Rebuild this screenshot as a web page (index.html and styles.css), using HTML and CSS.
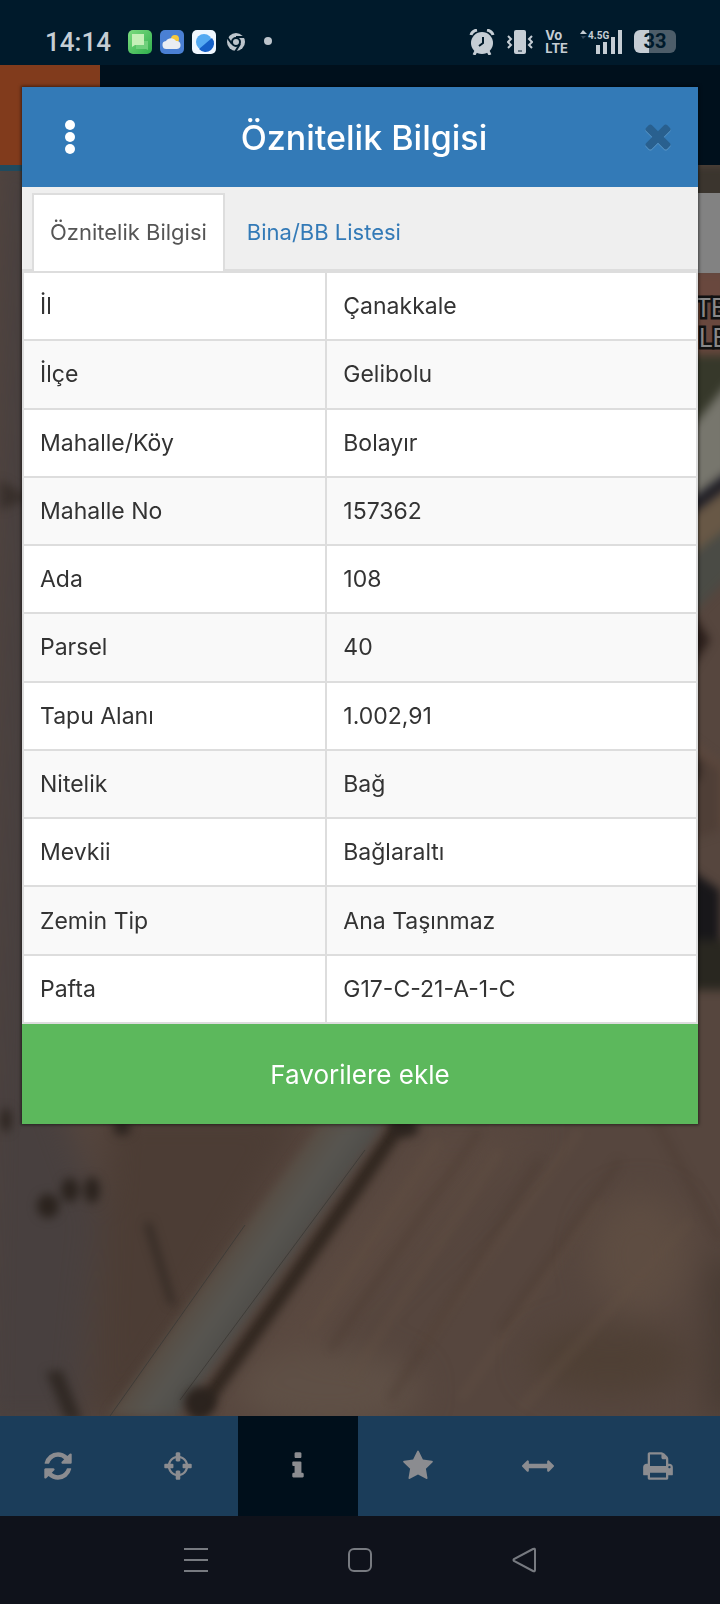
FILE: index.html
```html
<!DOCTYPE html>
<html lang="tr">
<head>
  <meta charset="UTF-8">
  <meta name="viewport" content="width=device-width, initial-scale=1">
  <title>Öznitelik Bilgisi</title>
  <link rel="stylesheet" href="styles.css">
</head>
<body>
  <div class="status-bar">
    <span class="clock">14:14</span>
    <svg class="app-icon" viewBox="0 0 24 24">
      <defs>
        <linearGradient id="msg" x1="0" y1="0" x2="1" y2="1"><stop offset="0" stop-color="#7ddc80"/><stop offset="1" stop-color="#2fae4c"/></linearGradient>
      </defs>
      <rect width="24" height="24" rx="5" fill="url(#msg)"/>
      <path d="M8 11h12v9l-2-1H8z" fill="#6fd07c"/>
      <path d="M4 4h12v11H7l-3 2z" fill="#c5f0b8"/>
    </svg>
    <svg class="app-icon" viewBox="0 0 24 24">
      <rect width="24" height="24" rx="5" fill="#4a80d4"/>
      <circle cx="15" cy="9" r="4" fill="#f7c83c"/>
      <path d="M7 19a4 4 0 0 1-1-8 6 6 0 0 1 10 0 4 4 0 0 1 1 8z" fill="#e9edf2"/>
    </svg>
    <svg class="app-icon" viewBox="0 0 24 24">
      <rect width="24" height="24" rx="5" fill="#f0f7ff"/>
      <circle cx="12" cy="12" r="8" fill="#55aaf2"/>
      <path d="M20 8a8 8 0 0 1-13 11z" fill="#1560c8"/>
    </svg>
    <svg class="app-icon" viewBox="0 0 24 24">
      <circle cx="12" cy="12" r="9" fill="#bcc4cb"/>
      <circle cx="12" cy="12" r="4" fill="none" stroke="#001a2b" stroke-width="2"/>
      <path d="M12 7h9M16 14l-5 8M8 14L3 7" fill="none" stroke="#001a2b" stroke-width="2"/>
    </svg>
    <svg class="app-icon" viewBox="0 0 24 24"><circle cx="12" cy="11" r="4" fill="#bcc4cb"/></svg>

    <div class="status-right">
      <svg class="sys-icon" viewBox="0 0 26 26">
        <circle cx="13" cy="14" r="11" fill="#c5cdd4"/>
        <path d="M2 6q1-4 6-5M24 6q-1-4-6-5" fill="none" stroke="#c5cdd4" stroke-width="3"/>
        <path d="M7 22l-2 4M19 22l2 4" stroke="#c5cdd4" stroke-width="3"/>
        <path d="M14 8v6l-4 3" fill="none" stroke="#001a2b" stroke-width="2"/>
      </svg>
      <svg class="sys-icon" viewBox="0 0 26 26">
        <rect x="7" y="1" width="12" height="24" rx="2" fill="#c5cdd4"/>
        <path d="M11 22h4" stroke="#001a2b"/>
        <path d="M1 7l3 3-3 3 3 3-3 3M25 7l-3 3 3 3-3 3 3 3" fill="none" stroke="#c5cdd4" stroke-width="2"/>
      </svg>
      <span class="volte">Vo<br>LTE</span>
      <svg class="signal" viewBox="0 0 42 26">
        <path d="M0 5l3-4 4 4z" fill="#c5cdd4"/>
        <path d="M1 7h5l-3 3z" fill="#33475a"/>
        <path d="M16 16h4v9h-4zM23 13h4v12h-4zM31 8h4v17h-4zM38 1h4v24h-4z" fill="#c5cdd4"/>
        <text x="8" y="10" class="signal-text">4.5G</text>
      </svg>
      <div class="battery">33</div>
    </div>
  </div>

  <div class="app-bar"><div class="app-logo"></div></div>

  <main class="map">
    <svg class="map-image" viewBox="0 165 720 1251" preserveAspectRatio="xMidYMid slice">
      <defs>
        <filter id="soft" x="-20%" y="-20%" width="140%" height="140%" color-interpolation-filters="sRGB"><feGaussianBlur stdDeviation="5"/></filter>
        <filter id="softer" x="-50%" y="-50%" width="200%" height="200%" color-interpolation-filters="sRGB"><feGaussianBlur stdDeviation="16"/></filter>
        <linearGradient id="road" gradientUnits="userSpaceOnUse" x1="225" y1="1240" x2="285" y2="1283">
          <stop offset="0" stop-color="#584b40"/><stop offset="0.5" stop-color="#575550"/><stop offset="1" stop-color="#4b4a47"/>
        </linearGradient>
      </defs>
      <rect y="165" width="720" height="1251" fill="#56463e"/>
      <!-- fields -->
      <g filter="url(#softer)">
        <path d="M0 150h60v950l40 110-20 220H-20z" fill="#48403f"/>
        <path d="M110 1110h200L130 1416H90z" fill="#4c3d35"/>
        <path d="M420 1130h120L250 1416h-50z" fill="#5a4940"/>
        <ellipse cx="640" cy="1255" rx="50" ry="60" fill="#5e4d42"/>
        <ellipse cx="330" cy="1390" rx="90" ry="40" fill="#5f5046"/>
        <ellipse cx="610" cy="1360" rx="80" ry="34" fill="#4f4035"/>
        <path d="M710 1260l30 0v156h-30z" fill="#453931"/>
      </g>
      <g filter="url(#soft)" fill="none" stroke="#625043" stroke-width="9" opacity="0.4">
        <path d="M440 1140L310 1330M500 1150L350 1380M580 1130L420 1350M600 1200L460 1400M690 1220L520 1410"/>
      </g>
      <g filter="url(#soft)" fill="none" stroke="#4a3930" stroke-width="8" opacity="0.4">
        <path d="M480 1130L330 1350M540 1160L390 1400M620 1160L500 1330M650 1110L720 1240"/>
      </g>
      <!-- road and its verges -->
      <path d="M400 1124L355 1190 285 1290 195 1416" fill="none" stroke="#30261f" stroke-width="14" filter="url(#soft)"/>
      <path d="M320 1124h64L178 1416h-70z" fill="url(#road)" filter="url(#soft)"/>
      <path d="M365 1150L180 1400M245 1225L110 1416" fill="none" stroke="#3f3c38"/>
      <!-- shrubs -->
      <g filter="url(#soft)" fill="#2b231e">
        <ellipse cx="70" cy="1190" rx="9" ry="12"/>
        <ellipse cx="92" cy="1190" rx="8" ry="13"/>
        <ellipse cx="48" cy="1206" rx="11" ry="12"/>
        <ellipse cx="6" cy="1120" rx="5" ry="12"/>
        <ellipse cx="122" cy="1128" rx="9" ry="7"/>
        <ellipse cx="405" cy="1128" rx="14" ry="9"/>
        <ellipse cx="200" cy="1402" rx="16" ry="15"/>
        <path d="M46 1372l16-2 20 50h-16zM145 1225l5-4 26 86-7-4z" opacity="0.8"/>
        <path d="M0 480l30 18-30 12z" opacity="0.6"/>
      </g>
      <!-- right edge -->
      <g filter="url(#soft)">
        <path d="M690 165h40v40h-40z" fill="#3b352e"/>
        <path d="M690 270h40v90h-40z" fill="#69483e"/>
        <path d="M690 355h40v30l-40 45z" fill="#36382a"/>
        <path d="M690 430l40-50v90l-40 30z" fill="#77766d"/>
        <path d="M690 500l40-30v16l-40 30z" fill="#1d1c25"/>
        <path d="M690 516l40-30v40l-40 30z" fill="#685846"/>
        <path d="M690 556l40-30v50l-40 40z" fill="#4a4b45"/>
        <path d="M690 610l20 30-20 30z" fill="#2a1e1a"/>
        <path d="M690 740l40 30v60l-40-20z" fill="#5d483d"/>
        <path d="M690 750l30 20v60l-30 10z" fill="#4f3f37"/>
        <path d="M690 760h10v20h-10z" fill="#332823"/>
        <path d="M690 870l30 20v60l-30 10z" fill="#18171a"/>
        <path d="M690 940h40v50h-40z" fill="#292720"/>
      </g>
      <g class="map-label">
        <text x="696" y="317">TE</text>
        <text x="699" y="347">LE</text>
      </g>
      <path d="M690 193h30v80h-30z" fill="#828282"/>
      <path d="M0 165h100v6H0z" fill="#1f4a5e"/>
    </svg>
  </main>

  <nav class="toolbar">
    <div class="toolbar-items">
      <button type="button" aria-label="Yenile"><svg viewBox="0 0 1792 1792"><path d="M1639 1056q0 5-1 7-64 268-268 434.5t-478 166.5q-146 0-282.5-55t-243.5-157l-129 129q-19 19-45 19t-45-19-19-45v-448q0-26 19-45t45-19h448q26 0 45 19t19 45-19 45l-137 137q71 66 161 102t187 36q134 0 250-65t186-179q11-17 53-117 8-23 30-23h192q13 0 22.5 9.5t9.5 22.5zm25-800v448q0 26-19 45t-45 19h-448q-26 0-45-19t-19-45 19-45l138-138q-148-137-349-137-134 0-250 65t-186 179q-11 17-53 117-8 23-30 23h-199q-13 0-22.5-9.5t-9.5-22.5v-7q65-268 270-434.5t480-166.5q146 0 284 55.5t245 156.5l130-129q19-19 45-19t45 19 19 45z"/></svg></button>
      <button type="button" aria-label="Konum"><svg viewBox="0 0 1792 1792"><path d="M1325 1024h-109q-26 0-45-19t-19-45v-128q0-26 19-45t45-19h109q-32-108-112.5-188.5t-188.5-112.5v109q0 26-19 45t-45 19h-128q-26 0-45-19t-19-45v-109q-108 32-188.5 112.5t-112.5 188.5h109q26 0 45 19t19 45v128q0 26-19 45t-45 19h-109q32 108 112.5 188.5t188.5 112.5v-109q0-26 19-45t45-19h128q26 0 45 19t19 45v109q108-32 188.5-112.5t112.5-188.5zm339-192v128q0 26-19 45t-45 19h-143q-37 161-154.5 278.5t-278.5 154.5v143q0 26-19 45t-45 19h-128q-26 0-45-19t-19-45v-143q-161-37-278.5-154.5t-154.5-278.5h-143q-26 0-45-19t-19-45v-128q0-26 19-45t45-19h143q37-161 154.5-278.5t278.5-154.5v-143q0-26 19-45t45-19h128q26 0 45 19t19 45v143q161 37 278.5 154.5t154.5 278.5h143q26 0 45 19t19 45z"/></svg></button>
      <button type="button" class="active" aria-label="Bilgi"><svg viewBox="0 0 1792 1792"><path d="M1216 1344v128q0 26-19 45t-45 19h-512q-26 0-45-19t-19-45v-128q0-26 19-45t45-19h64v-384h-64q-26 0-45-19t-19-45v-128q0-26 19-45t45-19h384q26 0 45 19t19 45v576h64q26 0 45 19t19 45zm-128-1152v192q0 26-19 45t-45 19h-256q-26 0-45-19t-19-45v-192q0-26 19-45t45-19h256q26 0 45 19t19 45z"/></svg></button>
      <button type="button" aria-label="Favoriler"><svg viewBox="0 0 1792 1792"><path d="M1728 647q0 22-26 48l-363 354 86 500q1 7 1 20 0 21-10.5 35.5t-30.5 14.5q-19 0-40-12l-449-236-449 236q-22 12-40 12-21 0-31.5-14.5t-10.5-35.5q0-6 2-20l86-500-364-354q-25-27-25-48 0-37 56-46l502-73 225-455q19-41 49-41t49 41l225 455 502 73q56 9 56 46z"/></svg></button>
      <button type="button" aria-label="Ölç"><svg viewBox="0 0 1792 1792"><path d="M1792 896q0 26-19 45l-256 256q-19 19-45 19t-45-19-19-45v-128h-1024v128q0 26-19 45t-45 19-45-19l-256-256q-19-19-19-45t19-45l256-256q19-19 45-19t45 19 19 45v128h1024v-128q0-26 19-45t45-19 45 19l256 256q19 19 19 45z"/></svg></button>
      <button type="button" aria-label="Yazdır"><svg viewBox="0 0 1792 1792"><path d="M448 1536h896v-256h-896v256zm0-640h896v-384h-160q-40 0-68-28t-28-68v-160h-640v640zm1152 64q0-26-19-45t-45-19-45 19-19 45 19 45 45 19 45-19 19-45zm128 0v416q0 13-9.5 22.5t-22.5 9.5h-224v160q0 40-28 68t-68 28h-960q-40 0-68-28t-28-68v-160h-224q-13 0-22.5-9.5t-9.5-22.5v-416q0-79 56.5-135.5t135.5-56.5h64v-544q0-40 28-68t68-28h672q40 0 88 20t76 48l152 152q28 28 48 76t20 88v256h64q79 0 135.5 56.5t56.5 135.5z"/></svg></button>
    </div>
  </nav>

  <div class="system-nav">
    <button type="button" aria-label="Son uygulamalar"><svg viewBox="0 0 26 26"><path d="M1 2h24M1 13h24M1 24h24"/></svg></button>
    <button type="button" aria-label="Ana ekran"><svg viewBox="0 0 26 26"><rect x="2" y="2" width="22" height="22" rx="5"/></svg></button>
    <button type="button" aria-label="Geri"><svg viewBox="0 0 26 26"><path d="M22 2L3 12q-1 1 0 2l19 10q2 1 2-1V3q0-2-2-1z"/></svg></button>
  </div>

  <section class="dialog" role="dialog" aria-labelledby="dialog-title">
    <header class="dialog-header">
      <button type="button" aria-label="Menü"><svg class="dots" viewBox="0 0 10 34"><circle cx="5" cy="5" r="5"/><circle cx="5" cy="17" r="5"/><circle cx="5" cy="29" r="5"/></svg></button>
      <h1 id="dialog-title">Öznitelik Bilgisi</h1>
      <button type="button" aria-label="Kapat"><svg class="close" viewBox="0 64 1792 1792"><path d="M1490 1322q0 40-28 68l-136 136q-28 28-68 28t-68-28l-294-294-294 294q-28 28-68 28t-68-28l-136-136q-28-28-28-68t28-68l294-294-294-294q-28-28-28-68t28-68l136-136q28-28 68-28t68 28l294 294 294-294q28-28 68-28t68 28l136 136q28 28 28 68t-28 68l-294 294 294 294q28 28 28 68z"/></svg></button>
    </header>
    <div class="tabs">
      <a href="#oznitelik" class="tab active">Öznitelik Bilgisi</a>
      <a href="#bina" class="tab">Bina/BB Listesi</a>
    </div>
    <table class="info" id="oznitelik">
      <tbody>
        <tr><th scope="row">İl</th><td>Çanakkale</td></tr>
        <tr><th scope="row">İlçe</th><td>Gelibolu</td></tr>
        <tr><th scope="row">Mahalle/Köy</th><td>Bolayır</td></tr>
        <tr><th scope="row">Mahalle No</th><td>157362</td></tr>
        <tr><th scope="row">Ada</th><td>108</td></tr>
        <tr><th scope="row">Parsel</th><td>40</td></tr>
        <tr><th scope="row">Tapu Alanı</th><td>1.002,91</td></tr>
        <tr><th scope="row">Nitelik</th><td>Bağ</td></tr>
        <tr><th scope="row">Mevkii</th><td>Bağlaraltı</td></tr>
        <tr><th scope="row">Zemin Tip</th><td>Ana Taşınmaz</td></tr>
        <tr><th scope="row">Pafta</th><td>G17-C-21-A-1-C</td></tr>
      </tbody>
    </table>
    <button type="button" class="favorite">Favorilere ekle</button>
  </section>
</body>
</html>
```

FILE: styles.css
```css
* { box-sizing: border-box; }
body {
  margin: 0;
  min-height: 100vh;
  display: flex;
  flex-direction: column;
  position: relative;
  overflow-x: hidden;
  font-family: Inter, Roboto, sans-serif;
  font-size: 23px;
  color: #333;
  background: #0f121b;
}
button {
  border: 0;
  padding: 0;
  background: none;
  font: inherit;
  color: inherit;
  cursor: pointer;
}
svg { display: block; }

.status-bar {
  display: flex;
  align-items: center;
  gap: 8px;
  height: 65px;
  padding: 18px 44px 0 45px;
  background: #001a2b;
  color: #c5cdd4;
}
.clock {
  font-family: Roboto, sans-serif;
  font-size: 26px;
  font-weight: 500;
  margin-right: 9px;
}
.app-icon { width: 24px; height: 24px; }
.status-right {
  display: flex;
  align-items: center;
  gap: 12px;
  margin-left: auto;
}
.sys-icon { width: 26px; height: 26px; }
.volte {
  font: bold 13px/13px Inter, sans-serif;
}
.signal { width: 42px; height: 26px; }
.signal-text {
  font: bold 10px Roboto, sans-serif;
  fill: #c5cdd4;
}
.battery {
  width: 42px;
  height: 23px;
  border-radius: 6px;
  background: linear-gradient(90deg, #c5cdd4 15px, #4d5d69 15px);
  color: #001a2b;
  font: bold 20px/23px Roboto, sans-serif;
  text-align: center;
}

.app-bar {
  height: 100px;
  background: #00101c;
}
.app-logo {
  width: 100px;
  height: 100px;
  background: #813b1c;
}

.map {
  flex: 1;
  min-height: 1000px;
  display: grid;
  overflow: hidden;
}
.map-image { width: 100%; height: 100%; }
.map-label {
  font-family: Roboto, sans-serif;
  font-size: 25px;
  fill: #888;
  stroke: #111;
  stroke-width: 5px;
  paint-order: stroke;
}

.toolbar {
  overflow: hidden;
  background: #1b3d5a;
}
.toolbar-items {
  display: grid;
  grid-template-columns: repeat(6, 1fr);
  margin: 0 2px 0 -2px;
}
.toolbar button {
  display: grid;
  place-items: center;
  height: 100px;
}
.toolbar .active { background: #000f1b; }
.toolbar svg {
  width: 32px;
  height: 32px;
  fill: #8b8c90;
}

.system-nav {
  display: flex;
  justify-content: center;
  gap: 138px;
  height: 88px;
}
.system-nav svg {
  width: 26px;
  height: 26px;
  fill: none;
  stroke: #777a80;
  stroke-width: 2;
}

.dialog {
  position: absolute;
  top: 87px;
  left: 22px;
  right: 22px;
  background: #fff;
  box-shadow: 0 0 3px 1px rgba(0,0,0,0.5);
}
.dialog-header {
  display: flex;
  align-items: center;
  justify-content: space-between;
  height: 100px;
  padding: 0 20px 0 28px;
  background: #337ab7;
  color: #fff;
}
.dialog-header button {
  display: grid;
  place-items: center;
  width: 40px;
  height: 40px;
}
.dialog-header h1 {
  margin: 0;
  font-size: 34px;
  font-weight: 500;
}
.dots {
  width: 10px;
  height: 34px;
  fill: #fff;
}
.close {
  width: 38px;
  height: 38px;
  fill: #29608f;
  filter: drop-shadow(0 1px 0 #5c98c8);
}

.tabs {
  display: flex;
  gap: 4px;
  padding: 6px 10px 0;
  background: #efefef;
  border-bottom: 2px solid #ddd;
}
.tab {
  padding: 20px 16px;
  border: 2px solid transparent;
  border-bottom: 0;
  font-size: 22px;
  line-height: 34px;
  color: #337ab7;
  text-decoration: none;
}
.tab.active {
  margin-bottom: -2px;
  color: #555;
  background: #fff;
  border-color: #ddd;
}

.info {
  width: 100%;
  height: 753px;
  table-layout: fixed;
  border-collapse: collapse;
  line-height: 34px;
}
.info th,
.info td {
  padding: 16px;
  border: 2px solid #ddd;
  text-align: left;
  font-weight: normal;
}
.info th { width: 45%; }
.info tr:nth-child(even) { background: #f9f9f9; }

.favorite {
  display: block;
  width: 100%;
  height: 100px;
  background: #5cb85c;
  color: #fff;
  font-size: 26px;
}
```
